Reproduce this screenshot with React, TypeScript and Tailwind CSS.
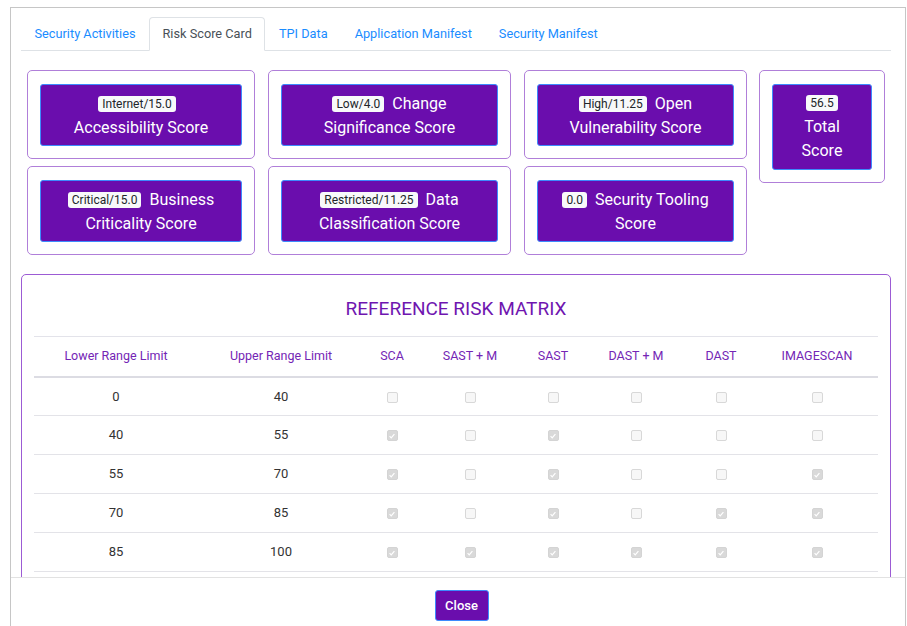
import React from "react";

type Score = {
  badge: string;
  label: string;
};

const scoreRows: Score[][] = [
  [
    { badge: "Internet/15.0", label: "Accessibility Score" },
    { badge: "Low/4.0", label: "Change Significance Score" },
    { badge: "High/11.25", label: "Open Vulnerability Score" },
  ],
  [
    { badge: "Critical/15.0", label: "Business Criticality Score" },
    { badge: "Restricted/11.25", label: "Data Classification Score" },
    { badge: "0.0", label: "Security Tooling Score" },
  ],
];

const tabs = ["Security Activities", "Risk Score Card", "TPI Data", "Application Manifest", "Security Manifest"];

const columns = ["Lower Range Limit", "Upper Range Limit", "SCA", "SAST + M", "SAST", "DAST + M", "DAST", "IMAGESCAN"];
const colWidths = ["w-[164px]", "w-[166px]", "w-[56px]", "w-[100px]", "w-[66px]", "w-[100px]", "w-[70px]", "w-[122px]"];

const matrix: { lower: number; upper: number; checks: boolean[] }[] = [
  { lower: 0, upper: 40, checks: [false, false, false, false, false, false] },
  { lower: 40, upper: 55, checks: [true, false, true, false, false, false] },
  { lower: 55, upper: 70, checks: [true, false, true, false, false, true] },
  { lower: 70, upper: 85, checks: [true, false, true, false, true, true] },
  { lower: 85, upper: 100, checks: [true, true, true, true, true, true] },
];

function Badge({ children }: { children: React.ReactNode }) {
  return (
    <span className="mr-[8px] inline-block rounded-[3px] bg-[#f8f9fa] px-[4px] align-[1px] text-[12px] leading-[16px] text-[#212529]">
      {children}
    </span>
  );
}

function ScoreButton({ score, cardWidth }: { score: Score; cardWidth: string }) {
  return (
    <div className={`${cardWidth} h-[89px] rounded-[5px] border border-[#b07fd9] px-[12px] py-[13px]`}>
      <div className="flex h-[62px] items-center justify-center rounded-[3px] border border-[#3d8bfd] bg-[#6a0dad] px-[20px] pt-[2px] text-center text-[16px] leading-[24px] text-white">
        <div>
          <Badge>{score.badge}</Badge>
          {score.label}
        </div>
      </div>
    </div>
  );
}

function Check({ on }: { on: boolean }) {
  return (
    <span
      className={`inline-flex h-[11px] w-[11px] items-center justify-center rounded-[2px] border align-middle ${
        on ? "border-[#d4d4d4] bg-[#d9d9d9]" : "border-[#d8d8d8] bg-[#f7f7f7]"
      }`}
    >
      {on && (
        <svg viewBox="0 0 10 10" className="h-[8px] w-[8px]">
          <path d="M2 5.2 L4 7.3 L8 2.6" fill="none" stroke="#ffffff" strokeWidth="1.5" />
        </svg>
      )}
    </span>
  );
}

export default function App() {
  const cardWidths = ["w-[228px]", "w-[243px]", "w-[223px]"];

  return (
    <div className="h-[626px] w-[907px] overflow-hidden bg-white pl-[10px] pt-[7px] font-['Roboto',sans-serif]">
      <div className="w-[896px] border border-b-0 border-[#c6c6c6] bg-white">
        <div className="h-[569px] overflow-hidden pl-[10px] pr-[14px] pt-[9px]">
          {/* tabs */}
          <div className="flex border-b border-[#dee2e6]">
            {tabs.map((t) =>
              t === "Risk Score Card" ? (
                <div
                  key={t}
                  className="-mb-px rounded-t-[4px] border border-b-white border-[#dee2e6] bg-white px-[12.5px] py-[7px] text-[12.75px] leading-[17px] text-[#495057]"
                >
                  {t}
                </div>
              ) : (
                <div key={t} className="border border-transparent px-[12.5px] py-[7px] text-[12.75px] leading-[17px] text-[#1a8cff]">
                  {t}
                </div>
              )
            )}
          </div>

          {/* score cards */}
          <div className="mt-[19px] flex gap-[12px] pl-[6px]">
            <div className="flex flex-col gap-[7px]">
              {scoreRows.map((row, i) => (
                <div key={i} className="flex gap-[13px]">
                  {row.map((s, j) => (
                    <ScoreButton key={s.label} score={s} cardWidth={cardWidths[j]} />
                  ))}
                </div>
              ))}
            </div>
            <div className="h-[113px] w-[126px] rounded-[5px] border border-[#b07fd9] px-[12px] py-[13px]">
              <div className="flex h-[86px] flex-col items-center justify-center rounded-[3px] border border-[#3d8bfd] bg-[#6a0dad] text-center text-[16px] leading-[24px] text-white">
                <div className="flex h-[24px] items-center">
                  <span className="rounded-[3px] bg-[#f8f9fa] px-[4px] text-[12px] leading-[16px] text-[#212529]">56.5</span>
                </div>
                <span>Total</span>
                <span>Score</span>
              </div>
            </div>
          </div>

          {/* reference risk matrix */}
          <div className="mt-[19px] rounded-[5px] border border-[#9c5bd4] px-[12px] pb-[20px] pt-[22px]">
            <h2 className="text-center text-[19px] leading-[24px] text-[#6f16b0]">REFERENCE RISK MATRIX</h2>
            <table className="mt-[15px] w-[844px] table-fixed border-collapse">
              <colgroup>
                {colWidths.map((w, i) => (
                  <col key={i} className={w} />
                ))}
              </colgroup>
              <thead>
                <tr className="h-[40px] border-y border-t-[#e3e3ea] border-b-2 border-b-[#dcdce3]">
                  {columns.map((c) => (
                    <th key={c} className="text-center text-[12.5px] font-normal text-[#7425b5]">
                      {c}
                    </th>
                  ))}
                </tr>
              </thead>
              <tbody>
                {matrix.map((r) => (
                  <tr key={r.lower} className="h-[39px] border-b border-[#e3e3e8]">
                    <td className="text-center text-[13px] text-[#333]">{r.lower}</td>
                    <td className="text-center text-[13px] text-[#333]">{r.upper}</td>
                    {r.checks.map((c, i) => (
                      <td key={i} className="text-center leading-none">
                        <Check on={c} />
                      </td>
                    ))}
                  </tr>
                ))}
              </tbody>
            </table>
          </div>
        </div>

        {/* footer */}
        <div className="flex h-[60px] justify-center border-t border-[#e2e2e2] pl-[7px] pt-[12px]">
          <button className="h-[31px] w-[54px] rounded-[3px] border border-[#3d8bfd] bg-[#6a0dad] text-[13px] font-medium text-white">
            Close
          </button>
        </div>
      </div>
    </div>
  );
}
